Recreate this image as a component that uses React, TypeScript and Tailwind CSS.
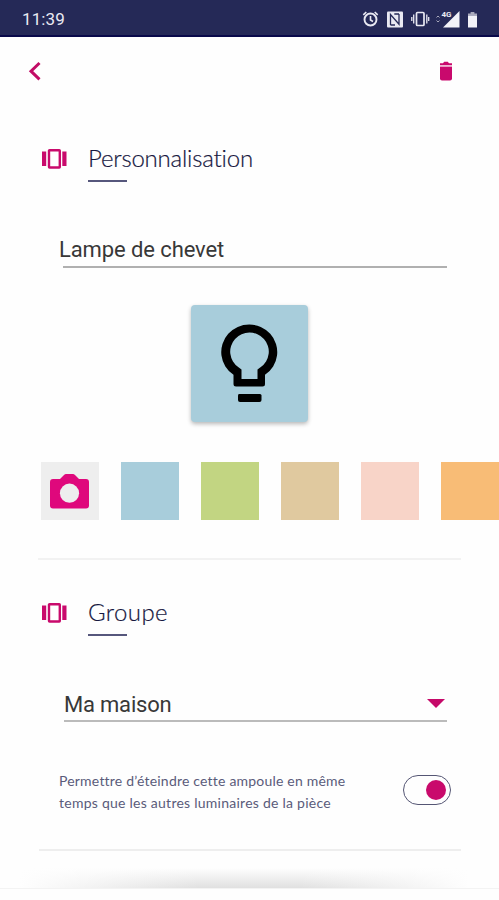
import React from "react";

const swatches = ["bg-[#a8cddb]", "bg-[#c2d582]", "bg-[#e0c99f]", "bg-[#f8d4c8]", "bg-[#f8bc76]"];

function CarouselIcon() {
  return (
    <svg className="h-5 w-[25px] shrink-0" viewBox="0 0 25 20">
      <path fill="#c90a6c" d="M0 2.5h4.2v14.5H0zM20.3 2.5h4.2v14.5h-4.2z" />
      <rect x="7" y="1.2" width="10.8" height="17.3" rx=".5" fill="white" stroke="#c90a6c" strokeWidth="2.4" />
    </svg>
  );
}

function SectionTitle({ title, spacing }: { title: string; spacing: string }) {
  return (
    <div className="flex h-10 items-start pl-[42px]">
      <div className="pt-[7px]"><CarouselIcon /></div>
      <div className="ml-[21px]">
        <h2 className={`h-[34px] whitespace-nowrap font-['Lato',sans-serif] text-[24px] font-light leading-[32px] text-[#16173f] [-webkit-text-stroke:0.2px_#16173f] [font-variant-ligatures:none] ${spacing}`}>{title}</h2>
        <div className="mt-[4px] h-[2px] w-[39px] bg-[#56577c]" />
      </div>
    </div>
  );
}

function StatusBar() {
  return (
    <div className="flex h-[37px] shrink-0 items-center border-b-2 border-[#09094a] bg-[#252957] pl-[22px]">
      <span className="pt-[4px] font-['Roboto',sans-serif] text-[17px] tracking-[0.1px] text-[#e9e9f2]">11:39</span>
      <svg className="ml-auto mr-[20px] mt-[2px] h-5 w-[118px]" viewBox="0 0 118 20" fill="none" stroke="#e9e9f2">
        <circle cx="9.5" cy="10.5" r="6" strokeWidth="1.9" />
        <path d="M9.5 7v4l2.5 1.5M2.3 5.8l3-2.8M16.7 5.8l-3-2.8" strokeWidth="1.6" />
        <rect x="26" y="2.5" width="16" height="16" rx="1" fill="#e9e9f2" stroke="none" />
        <path d="M29.5 16V5.5l8.5 9.8V5M33.3 5H38M29.5 16h4.5" stroke="#252957" strokeWidth="1.3" />
        <rect x="55.5" y="3.5" width="7.5" height="13" rx="1" strokeWidth="1.7" />
        <path d="M52.7 5.5v9M65.8 5.5v9M50.8 8v4M67.7 8v4" strokeWidth="1.3" />
        <path d="M75.5 8.5L77 7l1.5 1.5M75.5 11.5L77 13l1.5-1.5" stroke="#a9a9bc" strokeWidth="1" />
        <text x="80.5" y="8" fill="#e9e9f2" stroke="none" fontFamily="Roboto" fontWeight="700" fontSize="8">4G</text>
        <path d="M82 18.5L98.5 2v16.5z" fill="#f2f2f8" stroke="none" />
        <path d="M107 6.5V4.6h2.6V3h3.8v1.6h2.6v1.9z" fill="#a9a9bc" stroke="none" />
        <path d="M107 6.5h9v12h-9z" fill="#f2f2f8" stroke="none" />
      </svg>
    </div>
  );
}

export default function App() {
  return (
    <div className="flex h-[900px] w-[499px] flex-col overflow-hidden bg-[#fefefe]">
      <StatusBar />
      <header className="flex h-[105px] shrink-0 items-start justify-between pl-[28px] pr-[46px] pt-[24px]">
        <svg className="h-5 w-[14px]" viewBox="0 0 14 20"><path d="M11.5 2L3 10.2l8.5 8.1" fill="none" stroke="#c20d66" strokeWidth="3" /></svg>
        <svg className="h-5 w-[14px]" viewBox="0 0 14 20">
          <path d="M1 5.5h12v11.8q0 2.2-2 2.2H3q-2 0-2-2.2z" fill="#c9096d" />
          <path d="M1 2.3h3L5.2.7h3.6L10 2.3h3v1.8H1z" fill="#c9096d" />
          <path d="M1 4.1h12v1.4H1z" fill="#efb0d0" />
        </svg>
      </header>
      <section className="shrink-0">
        <SectionTitle title="Personnalisation" spacing="tracking-[-0.2px]" />
        <div className="ml-[59px] mt-[50px] w-[388px] font-['Roboto',sans-serif]">
          <div className="h-[34px] text-[22px] leading-[35px] tracking-[-0.1px] text-[#383838]">Lampe de chevet</div>
          <div className="ml-[4px] h-[2px] bg-[#b0b0b0]" />
        </div>
        <div className="ml-[191px] mt-[37px] h-[117px] w-[117px] rounded-[4px] bg-[#a8cddb] pl-[29px] pt-[18px] shadow-[0_2px_4px_rgba(0,0,0,0.28)]">
          <svg className="h-[80px] w-[60px]" viewBox="0 0 60 80">
            <path fillRule="evenodd" d="M13.5 53V51.8A28 27.5 0 1 1 45 51.8V61q0 2.5-2.5 2.5H16q-2.5 0-2.5-2.5zM21.5 56h16v-9.5l3-2.3a19.3 19 0 1 0-22 0l3 2.3z" />
            <path d="M19 71h21q1.5 0 1.5 1.5V77q0 2-2 2H20q-2 0-2-2v-4.5q0-1.5 1-1.5z" />
          </svg>
        </div>
        <div className="ml-[41px] mt-[40px] flex gap-[22px]">
          <div className="flex h-[58px] w-[58px] shrink-0 items-center justify-center bg-[#eee]">
            <svg className="mr-px h-[35px] w-[39px]" viewBox="0 0 39 35">
              <path fill="#df087c" d="M3 5h7l4-4q1-1 2-1h7q1 0 2 1l4 4h7q3 0 3 3v23.5q0 3-3 3H3q-3 0-3-3V8q0-3 3-3z" />
              <circle cx="19.5" cy="19.2" r="9.6" fill="#eee" />
            </svg>
          </div>
          {swatches.map((color) => <div key={color} className={`h-[58px] w-[58px] shrink-0 ${color}`} />)}
        </div>
        <div className="ml-[38px] mt-[38px] h-[2px] w-[423px] bg-[#f2f2f2]" />
      </section>
      <section className="shrink-0 pt-[36px]">
        <SectionTitle title="Groupe" spacing="tracking-[0.4px]" />
        <div className="ml-[64px] mt-[51px] w-[383px] border-b-2 border-[#bbb] font-['Roboto',sans-serif]">
          <div className="flex h-[33px] items-center justify-between text-[22px] tracking-[-0.2px] text-[#383838]">
            <span className="pt-px">Ma maison</span>
            <svg className="mr-[2px] h-[9px] w-[18px]" viewBox="0 0 18 9"><path d="M0 0h18L9 9z" fill="#c50969" /></svg>
          </div>
        </div>
        <div className="ml-[59px] mt-[48px] flex w-[392px] items-start justify-between">
          <p className="whitespace-nowrap font-['Lato',sans-serif] text-[14px] leading-[21.5px] text-[#5a5b7a]">
            <span className="block tracking-[0.2px]">Permettre d’éteindre cette ampoule en même</span>
            <span className="block tracking-[0.25px]">temps que les autres luminaires de la pièce</span>
          </p>
          <div className="mt-[5px] flex h-[30px] w-[48px] items-center justify-end rounded-full border-[1.5px] border-[#555674] pr-[4px]">
            <div className="h-[20px] w-[20px] rounded-full bg-[#c90a6c]" />
          </div>
        </div>
      </section>
      <div className="ml-[39px] mt-[36px] h-[2px] w-[422px] shrink-0 bg-[#eee]" />
      <div className="mt-auto h-[32px] shrink-0">
        <div className="h-[20px] bg-[linear-gradient(90deg,#fefefe_4%,transparent_40%,transparent_60%,#fefefe_94%),linear-gradient(#fefefe,#e0e0e0)]" />
        <div className="h-px bg-[#f3f3f3]" />
      </div>
    </div>
  );
}
